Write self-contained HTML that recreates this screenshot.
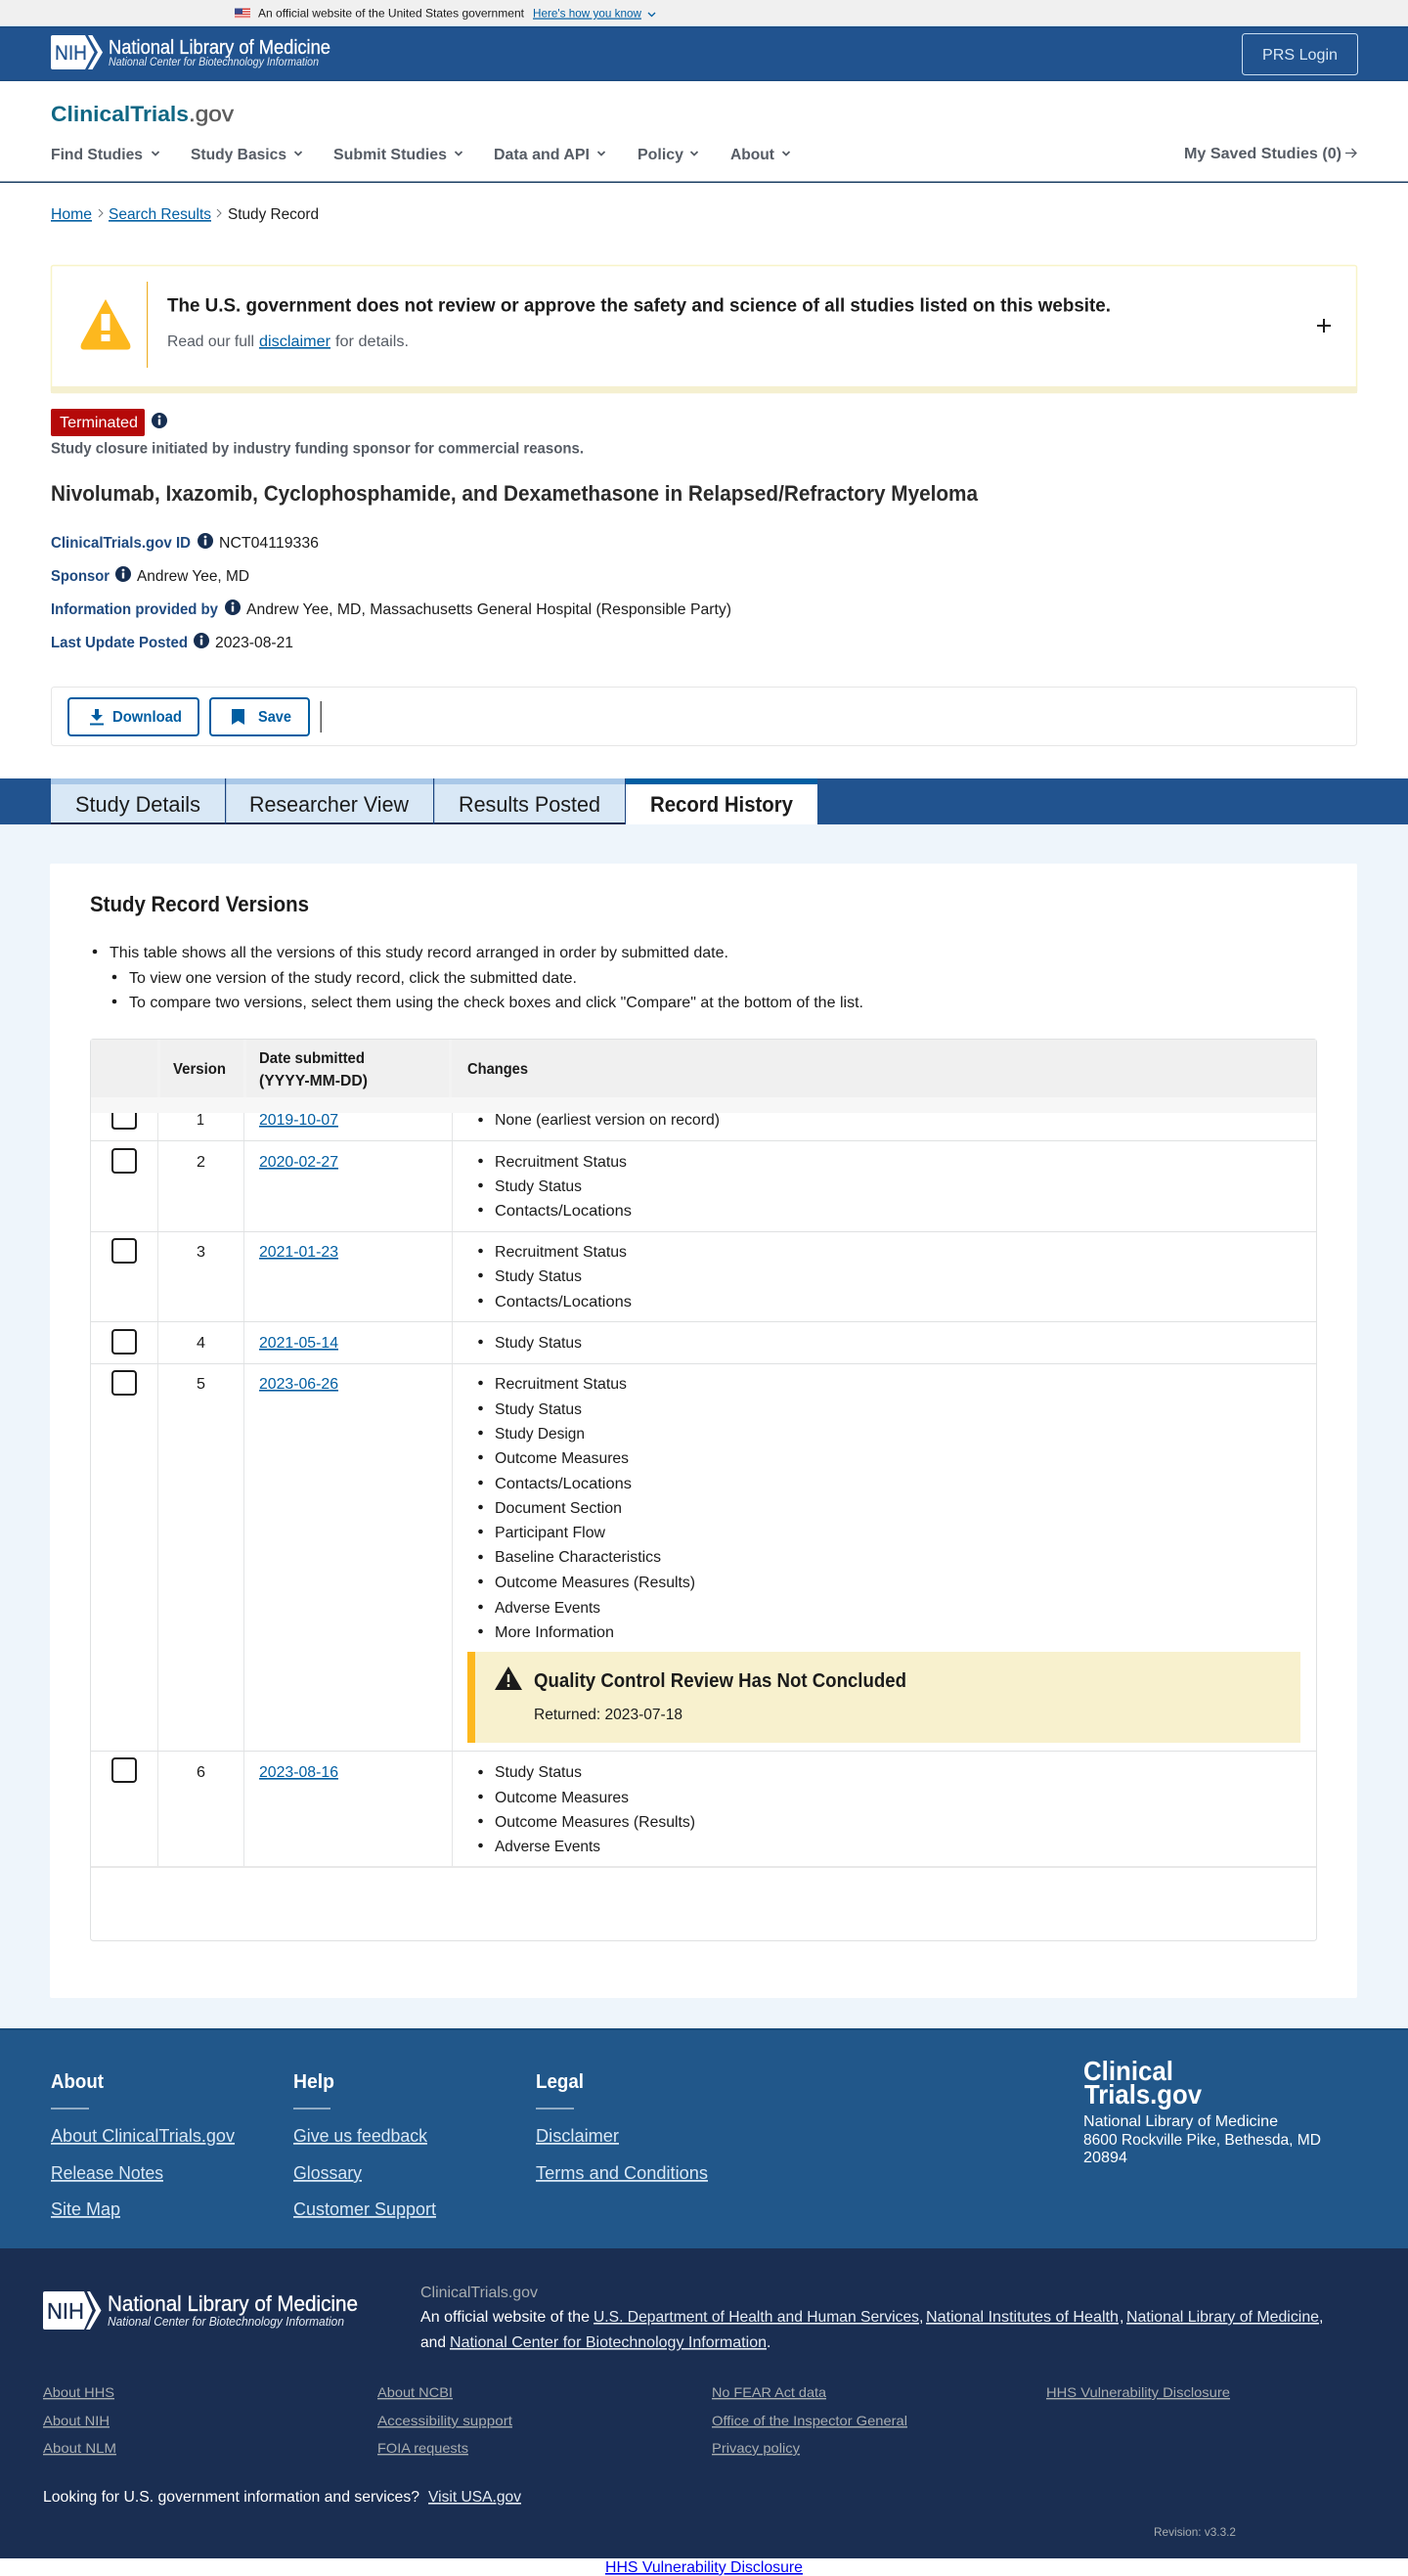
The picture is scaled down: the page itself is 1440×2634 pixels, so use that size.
<!DOCTYPE html>
<html lang="en"><head><meta charset="utf-8"><title>Study Record | ClinicalTrials.gov</title>
<style>
html,body{margin:0;padding:0;background:#fff}
svg{display:block}
text{font-family:"Liberation Sans",Arial,sans-serif;font-size:16px;fill:#1b1b1b}
.b{font-weight:bold}
.nav{font-weight:bold;fill:#565c65}
.lnk{fill:#005ea2;text-decoration:underline}
.f{fill:#d9e8f6;font-size:18px;text-decoration:underline}
.m{fill:#1f4a80;font-weight:bold}
.w{fill:#fff}
.wl{fill:#e6edf5;text-decoration:underline}
.s{fill:#a9aeb1;font-size:14px;text-decoration:underline}
.c{fill:none;stroke:#565c65;stroke-width:1.8}
</style></head><body>
<svg xmlns="http://www.w3.org/2000/svg" width="1440" height="2634" viewBox="0 0 1440 2634">
<defs>
<g id="i"><circle r="8" fill="#162e51"/><rect x="-1.2" y="-1.5" width="2.4" height="6" fill="#fff"/><circle cy="-4" r="1.4" fill="#fff"/></g>
<path id="ch" d="M-3.5 -2 L0 1.5 L3.5 -2" fill="none" stroke="#565c65" stroke-width="1.8"/>
<rect id="cb" width="24" height="24" rx="3" fill="#fff" stroke="#1b1b1b" stroke-width="2"/>
<circle id="d" r="2.300" fill="#1b1b1b"/>
</defs>

<!-- gov banner -->
<rect width="1440" height="26" fill="#f0f0f0"/>
<rect y="26" width="1440" height="1" fill="#cfe3f2"/>
<g>
<rect x="240" y="8.500" width="16" height="10.500" fill="#d83933"/>
<rect x="240" y="10" width="16" height="1.200" fill="#fff"/><rect x="240" y="12.600" width="16" height="1.200" fill="#fff"/><rect x="240" y="15.200" width="16" height="1.200" fill="#fff"/><rect x="240" y="17.600" width="16" height="1.200" fill="#fff"/>
<rect x="240" y="8.500" width="8" height="6" fill="#3c4a8c"/>
</g>
<text x="264" y="17.500" textLength="272" lengthAdjust="spacingAndGlyphs" style="font-size:12px">An official website of the United States government</text>
<text x="545" y="17.500" textLength="111" lengthAdjust="spacingAndGlyphs" class="lnk" style="font-size:12px">Here's how you know</text>
<path d="M663 13 L666.500 16.500 L670 13" fill="none" stroke="#005ea2" stroke-width="1.300"/>

<!-- header -->
<rect y="27" width="1440" height="56" fill="#21538f"/>
<rect y="27" width="1440" height="1.500" fill="#1b4a7f"/>
<rect y="81.500" width="1440" height="1.500" fill="#1b4a7f"/>
<path d="M54 36 H87 L96.500 53.500 L87 71 H54 Q52 71 52 69 V38 Q52 36 54 36Z" fill="#fff"/>
<path d="M90 36 H94.500 L105 53.500 L94.500 71 H90 L100 53.500Z" fill="#fff"/>
<text x="56" y="61" textLength="33" lengthAdjust="spacingAndGlyphs" style="font-size:21px;fill:#21538f;stroke:#21538f;stroke-width:.3">NIH</text>
<text x="111" y="55" textLength="227" lengthAdjust="spacingAndGlyphs" class="w" style="font-size:20px;stroke:#fff;stroke-width:.3">National Library of Medicine</text>
<text x="111" y="67" textLength="215" lengthAdjust="spacingAndGlyphs" style="font-size:11.500px;font-style:italic;fill:#e6edf5">National Center for Biotechnology Information</text>
<rect x="1270.500" y="34.500" width="118" height="42" rx="3" fill="none" stroke="#c9def2" stroke-width="1"/>
<text x="1291" y="61" textLength="77" lengthAdjust="spacingAndGlyphs" style="font-size:16px;fill:#d9e8f6">PRS Login</text>

<!-- nav -->
<text x="52" y="124" textLength="141" lengthAdjust="spacingAndGlyphs" class="b" style="font-size:22px;fill:#0f6784">ClinicalTrials</text>
<text x="193" y="124" textLength="46" lengthAdjust="spacingAndGlyphs" style="font-size:22px;fill:#5c5c5c;stroke:#5c5c5c;stroke-width:.4">.gov</text>
<text x="52" y="163" textLength="94" lengthAdjust="spacingAndGlyphs" class="nav">Find Studies</text><use href="#ch" x="159" y="157"/>
<text x="195" y="163" textLength="98" lengthAdjust="spacingAndGlyphs" class="nav">Study Basics</text><use href="#ch" x="305" y="157"/>
<text x="341" y="163" textLength="116" lengthAdjust="spacingAndGlyphs" class="nav">Submit Studies</text><use href="#ch" x="469" y="157"/>
<text x="505" y="163" textLength="98" lengthAdjust="spacingAndGlyphs" class="nav">Data and API</text><use href="#ch" x="615" y="157"/>
<text x="652" y="163" textLength="47" lengthAdjust="spacingAndGlyphs" class="nav">Policy</text><use href="#ch" x="710" y="157"/>
<text x="747" y="163" textLength="45" lengthAdjust="spacingAndGlyphs" class="nav">About</text><use href="#ch" x="804" y="157"/>
<text x="1211" y="162" textLength="161" lengthAdjust="spacingAndGlyphs" class="nav">My Saved Studies (0)</text>
<path d="M1376 156.500 H1387 M1382.500 152 L1387 156.500 L1382.500 161" fill="none" stroke="#565c65" stroke-width="1.300"/>
<rect y="185.500" width="1440" height="1.500" fill="#1b3f63"/>

<!-- breadcrumb -->
<text x="52" y="224" textLength="42" lengthAdjust="spacingAndGlyphs" class="lnk">Home</text>
<path d="M101 214 L105 218 L101 222" class="c" style="stroke-width:1;stroke:#71767a"/>
<text x="111" y="224" textLength="105" lengthAdjust="spacingAndGlyphs" class="lnk">Search Results</text>
<path d="M222 214 L226 218 L222 222" class="c" style="stroke-width:1;stroke:#71767a"/>
<text x="233" y="224" textLength="93" lengthAdjust="spacingAndGlyphs">Study Record</text>

<!-- alert -->
<rect x="52.500" y="271.500" width="1335" height="130" rx="2" fill="#fff" stroke="#f8f4c8" stroke-width="1.500"/>
<rect x="52" y="395" width="1336" height="7" fill="#f5f0d0"/>
<path d="M108 307 L132.500 352 Q134 357 130 357 H86 Q82 357 83.500 352Z" fill="#fdb81e" stroke="#fdb81e" stroke-width="1"/>
<rect x="103.500" y="321" width="9" height="17" fill="#fff"/><rect x="103.500" y="342" width="9" height="7" fill="#fff"/>
<rect x="150" y="288" width="1.200" height="88" fill="#eeb02a"/>
<text x="171" y="318.500" textLength="965" lengthAdjust="spacingAndGlyphs" class="b" style="font-size:19px">The U.S. government does not review or approve the safety and science of all studies listed on this website.</text>
<text x="171" y="354" textLength="89" lengthAdjust="spacingAndGlyphs" style="fill:#565c65">Read our full</text>
<text x="265" y="354" textLength="73" lengthAdjust="spacingAndGlyphs" class="lnk">disclaimer</text>
<text x="343" y="354" textLength="75" lengthAdjust="spacingAndGlyphs" style="fill:#565c65">for details.</text>
<path d="M1347 333 H1361 M1354 326 V340" stroke="#1b1b1b" stroke-width="2"/>

<!-- status -->
<rect x="52" y="418" width="96" height="28" rx="2" fill="#b50909"/>
<text x="61" y="437" textLength="80" lengthAdjust="spacingAndGlyphs" class="w">Terminated</text>
<use href="#i" x="163" y="430"/>
<text x="52" y="463.500" textLength="545" lengthAdjust="spacingAndGlyphs" class="b" style="fill:#565c65">Study closure initiated by industry funding sponsor for commercial reasons.</text>
<text x="52" y="512" textLength="948" lengthAdjust="spacingAndGlyphs" class="b" style="font-size:22px;fill:#2b2b2b">Nivolumab, Ixazomib, Cyclophosphamide, and Dexamethasone in Relapsed/Refractory Myeloma</text>

<text x="52" y="560" textLength="143" lengthAdjust="spacingAndGlyphs" class="m">ClinicalTrials.gov ID</text><use href="#i" x="210" y="553"/>
<text x="224" y="560" textLength="102" lengthAdjust="spacingAndGlyphs">NCT04119336</text>
<text x="52" y="594" textLength="60" lengthAdjust="spacingAndGlyphs" class="m">Sponsor</text><use href="#i" x="126" y="587"/>
<text x="140" y="594" textLength="115" lengthAdjust="spacingAndGlyphs">Andrew Yee, MD</text>
<text x="52" y="628" textLength="171" lengthAdjust="spacingAndGlyphs" class="m">Information provided by</text><use href="#i" x="238" y="621"/>
<text x="252" y="628" textLength="496" lengthAdjust="spacingAndGlyphs">Andrew Yee, MD, Massachusetts General Hospital (Responsible Party)</text>
<text x="52" y="662" textLength="140" lengthAdjust="spacingAndGlyphs" class="m">Last Update Posted</text><use href="#i" x="206" y="655"/>
<text x="220" y="662" textLength="80" lengthAdjust="spacingAndGlyphs">2023-08-21</text>

<!-- actions -->
<rect x="52.500" y="702.500" width="1335" height="60" rx="3" fill="#fff" stroke="#e6e6e6"/>
<rect x="70" y="714" width="133" height="38" rx="3" fill="#fff" stroke="#005ea2" stroke-width="2"/>
<path d="M97 725 H101 V731 H105 L99 737 L93 731 H97Z M92 739.500 H106 V741.500 H92Z" fill="#005ea2"/>
<text x="115" y="738" textLength="71" lengthAdjust="spacingAndGlyphs" class="b" style="fill:#005ea2">Download</text>
<rect x="215" y="714" width="101" height="38" rx="3" fill="#fff" stroke="#005ea2" stroke-width="2"/>
<path d="M237 725 H250 V741 L243.500 737 L237 741Z" fill="#005ea2"/>
<text x="264" y="738" textLength="34" lengthAdjust="spacingAndGlyphs" class="b" style="fill:#005ea2">Save</text>
<rect x="327.500" y="717" width="1.500" height="32" fill="#555"/>

<!-- main bg -->
<rect y="843" width="1440" height="1231" fill="#eef5fb"/>

<!-- tabs -->
<rect y="796" width="1440" height="47" fill="#21538f"/>
<rect x="52" y="796" width="588" height="47" fill="#d9e8f6"/>
<rect x="52" y="796" width="588" height="6" fill="#a9c8e8"/>
<rect x="52" y="841" width="588" height="2" fill="#162e51"/>
<rect x="230" y="796" width="1.200" height="47" fill="#1a4480"/>
<rect x="443" y="796" width="1.200" height="47" fill="#1a4480"/>
<rect x="639" y="796" width="1.200" height="47" fill="#1a4480"/>
<rect x="640" y="802" width="196" height="41" fill="#fff"/>
<rect x="640" y="796" width="196" height="6" fill="#005ea2"/>
<text x="77" y="830" textLength="128" lengthAdjust="spacingAndGlyphs" style="font-size:22px">Study Details</text>
<text x="255" y="830" textLength="163" lengthAdjust="spacingAndGlyphs" style="font-size:22px">Researcher View</text>
<text x="469" y="830" textLength="145" lengthAdjust="spacingAndGlyphs" style="font-size:22px">Results Posted</text>
<text x="665" y="830" textLength="146" lengthAdjust="spacingAndGlyphs" class="b" style="font-size:22px">Record History</text>

<!-- card -->
<rect x="51" y="883" width="1337" height="1160" rx="2" fill="#fff"/>
<text x="92" y="932" textLength="224" lengthAdjust="spacingAndGlyphs" class="b" style="font-size:22px">Study Record Versions</text>
<use href="#d" x="97" y="973"/>
<text x="112" y="979" textLength="633" lengthAdjust="spacingAndGlyphs">This table shows all the versions of this study record arranged in order by submitted date.</text>
<use href="#d" x="117" y="999"/>
<text x="132" y="1005" textLength="458" lengthAdjust="spacingAndGlyphs">To view one version of the study record, click the submitted date.</text>
<use href="#d" x="117" y="1024"/>
<text x="132" y="1030" textLength="751" lengthAdjust="spacingAndGlyphs">To compare two versions, select them using the check boxes and click "Compare" at the bottom of the list.</text>

<!-- table -->
<rect x="92.500" y="1062.500" width="1254" height="922" rx="3" fill="#fff" stroke="#dfe1e2"/>
<g fill="#e4e5e6">
<rect x="161" y="1138" width="1" height="772"/><rect x="249" y="1138" width="1" height="772"/><rect x="462" y="1138" width="1" height="772"/>
</g>
<!-- row 1 -->
<path d="M115 1138 V1151 Q115 1154 118 1154 H136 Q139 1154 139 1151 V1138" fill="none" stroke="#1b1b1b" stroke-width="2"/>
<text x="201" y="1150" textLength="8" lengthAdjust="spacingAndGlyphs">1</text>
<text x="265" y="1150" textLength="81" lengthAdjust="spacingAndGlyphs" class="lnk">2019-10-07</text>
<use href="#d" x="491.500" y="1145"/><text x="506" y="1150" textLength="230" lengthAdjust="spacingAndGlyphs">None (earliest version on record)</text>
<!-- head -->
<rect x="93" y="1063" width="1253" height="59" fill="#f0f0f0"/>
<rect x="93" y="1122" width="1253" height="16" fill="#f7f7f7"/>
<g fill="#f3f3f3"><rect x="161" y="1063" width="3" height="59"/><rect x="249" y="1063" width="3" height="59"/><rect x="459" y="1063" width="3" height="59"/></g>
<text x="177" y="1098" textLength="54" lengthAdjust="spacingAndGlyphs" class="b">Version</text>
<text x="265" y="1087" textLength="108" lengthAdjust="spacingAndGlyphs" class="b">Date submitted</text>
<text x="265" y="1110" textLength="111" lengthAdjust="spacingAndGlyphs" class="b">(YYYY-MM-DD)</text>
<text x="478" y="1098" textLength="62" lengthAdjust="spacingAndGlyphs" class="b">Changes</text>
<!-- row lines -->
<g fill="#dfe1e2">
<rect x="93" y="1166" width="1253" height="1"/><rect x="93" y="1259" width="1253" height="1"/><rect x="93" y="1351" width="1253" height="1"/><rect x="93" y="1394" width="1253" height="1"/><rect x="93" y="1790" width="1253" height="1"/>
</g>
<rect x="93" y="1908" width="1253" height="2" fill="#e8e8e8"/>
<!-- row 2 -->
<use href="#cb" x="115" y="1175"/>
<text x="201" y="1193" textLength="9" lengthAdjust="spacingAndGlyphs">2</text>
<text x="265" y="1193" textLength="81" lengthAdjust="spacingAndGlyphs" class="lnk">2020-02-27</text>
<use href="#d" x="491.500" y="1187"/><text x="506" y="1193" textLength="135" lengthAdjust="spacingAndGlyphs">Recruitment Status</text>
<use href="#d" x="491.500" y="1212"/><text x="506" y="1218" textLength="89" lengthAdjust="spacingAndGlyphs">Study Status</text>
<use href="#d" x="491.500" y="1237"/><text x="506" y="1243" textLength="140" lengthAdjust="spacingAndGlyphs">Contacts/Locations</text>
<!-- row 3 -->
<use href="#cb" x="115" y="1267"/>
<text x="201" y="1285" textLength="9" lengthAdjust="spacingAndGlyphs">3</text>
<text x="265" y="1285" textLength="81" lengthAdjust="spacingAndGlyphs" class="lnk">2021-01-23</text>
<use href="#d" x="491.500" y="1279"/><text x="506" y="1285" textLength="135" lengthAdjust="spacingAndGlyphs">Recruitment Status</text>
<use href="#d" x="491.500" y="1304"/><text x="506" y="1310" textLength="89" lengthAdjust="spacingAndGlyphs">Study Status</text>
<use href="#d" x="491.500" y="1330"/><text x="506" y="1336" textLength="140" lengthAdjust="spacingAndGlyphs">Contacts/Locations</text>
<!-- row 4 -->
<use href="#cb" x="115" y="1360"/>
<text x="201" y="1378" textLength="9" lengthAdjust="spacingAndGlyphs">4</text>
<text x="265" y="1378" textLength="81" lengthAdjust="spacingAndGlyphs" class="lnk">2021-05-14</text>
<use href="#d" x="491.500" y="1372"/><text x="506" y="1378" textLength="89" lengthAdjust="spacingAndGlyphs">Study Status</text>
<!-- row 5 -->
<use href="#cb" x="115" y="1402"/>
<text x="201" y="1420" textLength="9" lengthAdjust="spacingAndGlyphs">5</text>
<text x="265" y="1420" textLength="81" lengthAdjust="spacingAndGlyphs" class="lnk">2023-06-26</text>
<use href="#d" x="491.500" y="1414"/><text x="506" y="1420" textLength="135" lengthAdjust="spacingAndGlyphs">Recruitment Status</text>
<use href="#d" x="491.500" y="1440"/><text x="506" y="1446" textLength="89" lengthAdjust="spacingAndGlyphs">Study Status</text>
<use href="#d" x="491.500" y="1465"/><text x="506" y="1471" textLength="92" lengthAdjust="spacingAndGlyphs">Study Design</text>
<use href="#d" x="491.500" y="1490"/><text x="506" y="1496" textLength="137" lengthAdjust="spacingAndGlyphs">Outcome Measures</text>
<use href="#d" x="491.500" y="1516"/><text x="506" y="1522" textLength="140" lengthAdjust="spacingAndGlyphs">Contacts/Locations</text>
<use href="#d" x="491.500" y="1541"/><text x="506" y="1547" textLength="130" lengthAdjust="spacingAndGlyphs">Document Section</text>
<use href="#d" x="491.500" y="1566"/><text x="506" y="1572" textLength="113" lengthAdjust="spacingAndGlyphs">Participant Flow</text>
<use href="#d" x="491.500" y="1592"/><text x="506" y="1597" textLength="170" lengthAdjust="spacingAndGlyphs">Baseline Characteristics</text>
<use href="#d" x="491.500" y="1617"/><text x="506" y="1623" textLength="205" lengthAdjust="spacingAndGlyphs">Outcome Measures (Results)</text>
<use href="#d" x="491.500" y="1643"/><text x="506" y="1649" textLength="108" lengthAdjust="spacingAndGlyphs">Adverse Events</text>
<use href="#d" x="491.500" y="1668"/><text x="506" y="1674" textLength="122" lengthAdjust="spacingAndGlyphs">More Information</text>
<rect x="478" y="1689" width="852" height="93" fill="#f8f1ce"/>
<rect x="478" y="1689" width="8" height="93" fill="#fdb81e"/>
<path d="M520 1704 L534 1728 H506Z" fill="#1b1b1b"/>
<rect x="518.800" y="1712" width="2.400" height="8" fill="#f8f1ce"/><rect x="518.800" y="1722" width="2.400" height="3" fill="#f8f1ce"/>
<text x="546" y="1725" textLength="381" lengthAdjust="spacingAndGlyphs" class="b" style="font-size:20px">Quality Control Review Has Not Concluded</text>
<text x="546" y="1758" textLength="152" lengthAdjust="spacingAndGlyphs">Returned: 2023-07-18</text>
<!-- row 6 -->
<use href="#cb" x="115" y="1798"/>
<text x="201" y="1817" textLength="9" lengthAdjust="spacingAndGlyphs">6</text>
<text x="265" y="1817" textLength="81" lengthAdjust="spacingAndGlyphs" class="lnk">2023-08-16</text>
<use href="#d" x="491.500" y="1812"/><text x="506" y="1817" textLength="89" lengthAdjust="spacingAndGlyphs">Study Status</text>
<use href="#d" x="491.500" y="1837"/><text x="506" y="1843" textLength="137" lengthAdjust="spacingAndGlyphs">Outcome Measures</text>
<use href="#d" x="491.500" y="1862"/><text x="506" y="1868" textLength="205" lengthAdjust="spacingAndGlyphs">Outcome Measures (Results)</text>
<use href="#d" x="491.500" y="1887"/><text x="506" y="1893" textLength="108" lengthAdjust="spacingAndGlyphs">Adverse Events</text>

<!-- footer 1 -->
<rect y="2074" width="1440" height="225" fill="#21578a"/>
<rect y="2074" width="1440" height="2" fill="#174a7a"/>
<text x="52" y="2135" textLength="54" lengthAdjust="spacingAndGlyphs" class="b w" style="font-size:20px">About</text>
<text x="300" y="2135" textLength="42" lengthAdjust="spacingAndGlyphs" class="b w" style="font-size:20px">Help</text>
<text x="548" y="2135" textLength="49" lengthAdjust="spacingAndGlyphs" class="b w" style="font-size:20px">Legal</text>
<rect x="52" y="2155.500" width="39" height="1" fill="#fff"/><rect x="300" y="2155.500" width="38" height="1" fill="#fff"/><rect x="548" y="2155.500" width="39" height="1" fill="#fff"/>
<text x="52" y="2190" textLength="188" lengthAdjust="spacingAndGlyphs" class="f">About ClinicalTrials.gov</text>
<text x="52" y="2228" textLength="115" lengthAdjust="spacingAndGlyphs" class="f">Release Notes</text>
<text x="52" y="2265" textLength="71" lengthAdjust="spacingAndGlyphs" class="f">Site Map</text>
<text x="300" y="2190" textLength="137" lengthAdjust="spacingAndGlyphs" class="f">Give us feedback</text>
<text x="300" y="2228" textLength="70" lengthAdjust="spacingAndGlyphs" class="f">Glossary</text>
<text x="300" y="2265" textLength="146" lengthAdjust="spacingAndGlyphs" class="f">Customer Support</text>
<text x="548" y="2190" textLength="85" lengthAdjust="spacingAndGlyphs" class="f">Disclaimer</text>
<text x="548" y="2228" textLength="176" lengthAdjust="spacingAndGlyphs" class="f">Terms and Conditions</text>
<text x="1108" y="2127" textLength="92" lengthAdjust="spacingAndGlyphs" class="b w" style="font-size:28px">Clinical</text>
<text x="1109" y="2151" textLength="120" lengthAdjust="spacingAndGlyphs" class="b w" style="font-size:28px">Trials.gov</text>
<text x="1108" y="2174" textLength="199" lengthAdjust="spacingAndGlyphs" class="w">National Library of Medicine</text>
<text x="1108" y="2193" textLength="243" lengthAdjust="spacingAndGlyphs" class="w">8600 Rockville Pike, Bethesda, MD</text>
<text x="1108" y="2211" textLength="45" lengthAdjust="spacingAndGlyphs" class="w">20894</text>

<!-- footer 2 -->
<rect y="2299" width="1440" height="317" fill="#1a2e52"/>
<path d="M46 2343 H86 L94.500 2362.500 L86 2382 H46 Q44 2382 44 2380 V2345 Q44 2343 46 2343Z" fill="#fff"/>
<path d="M89 2343 H92 L103.500 2362.500 L92 2382 H88 L98 2362.500Z" fill="#fff"/>
<text x="48" y="2371" textLength="38" lengthAdjust="spacingAndGlyphs" style="font-size:23px;fill:#1a2e52;stroke:#1a2e52;stroke-width:.3">NIH</text>
<text x="110" y="2363" textLength="256" lengthAdjust="spacingAndGlyphs" class="w" style="font-size:22px;stroke:#fff;stroke-width:.3">National Library of Medicine</text>
<text x="110" y="2378" textLength="242" lengthAdjust="spacingAndGlyphs" style="font-size:13px;font-style:italic;fill:#e6edf5">National Center for Biotechnology Information</text>
<text x="430" y="2349" textLength="120" lengthAdjust="spacingAndGlyphs" style="fill:#a9aeb1">ClinicalTrials.gov</text>
<text x="430" y="2374" textLength="173" lengthAdjust="spacingAndGlyphs" class="w">An official website of the</text>
<text x="607" y="2374" textLength="333" lengthAdjust="spacingAndGlyphs" class="wl">U.S. Department of Health and Human Services</text>
<text x="940" y="2374" class="w">,</text>
<text x="947" y="2374" textLength="197" lengthAdjust="spacingAndGlyphs" class="wl">National Institutes of Health</text>
<text x="1145" y="2374" class="w">,</text>
<text x="1152" y="2374" textLength="197" lengthAdjust="spacingAndGlyphs" class="wl">National Library of Medicine</text>
<text x="1349" y="2374" class="w">,</text>
<text x="430" y="2400" textLength="26" lengthAdjust="spacingAndGlyphs" class="w">and</text>
<text x="460" y="2400" textLength="324" lengthAdjust="spacingAndGlyphs" class="wl">National Center for Biotechnology Information</text>
<text x="784" y="2400" class="w">.</text>
<text x="44" y="2451" textLength="73" lengthAdjust="spacingAndGlyphs" class="s">About HHS</text>
<text x="44" y="2480" textLength="68" lengthAdjust="spacingAndGlyphs" class="s">About NIH</text>
<text x="44" y="2508" textLength="75" lengthAdjust="spacingAndGlyphs" class="s">About NLM</text>
<text x="386" y="2451" textLength="77" lengthAdjust="spacingAndGlyphs" class="s">About NCBI</text>
<text x="386" y="2480" textLength="138" lengthAdjust="spacingAndGlyphs" class="s">Accessibility support</text>
<text x="386" y="2508" textLength="93" lengthAdjust="spacingAndGlyphs" class="s">FOIA requests</text>
<text x="728" y="2451" textLength="117" lengthAdjust="spacingAndGlyphs" class="s">No FEAR Act data</text>
<text x="728" y="2480" textLength="200" lengthAdjust="spacingAndGlyphs" class="s">Office of the Inspector General</text>
<text x="728" y="2508" textLength="90" lengthAdjust="spacingAndGlyphs" class="s">Privacy policy</text>
<text x="1070" y="2451" textLength="188" lengthAdjust="spacingAndGlyphs" class="s">HHS Vulnerability Disclosure</text>
<text x="44" y="2558" textLength="385" lengthAdjust="spacingAndGlyphs" class="w">Looking for U.S. government information and services?</text>
<text x="438" y="2558" textLength="95" lengthAdjust="spacingAndGlyphs" class="wl">Visit USA.gov</text>
<text x="1180" y="2593" textLength="84" lengthAdjust="spacingAndGlyphs" style="font-size:12px;fill:#a9aeb1">Revision: v3.3.2</text>

<!-- bottom -->
<text x="619" y="2630" textLength="202" lengthAdjust="spacingAndGlyphs" style="fill:#0000ee;text-decoration:underline">HHS Vulnerability Disclosure</text>
</svg>
</body></html>
